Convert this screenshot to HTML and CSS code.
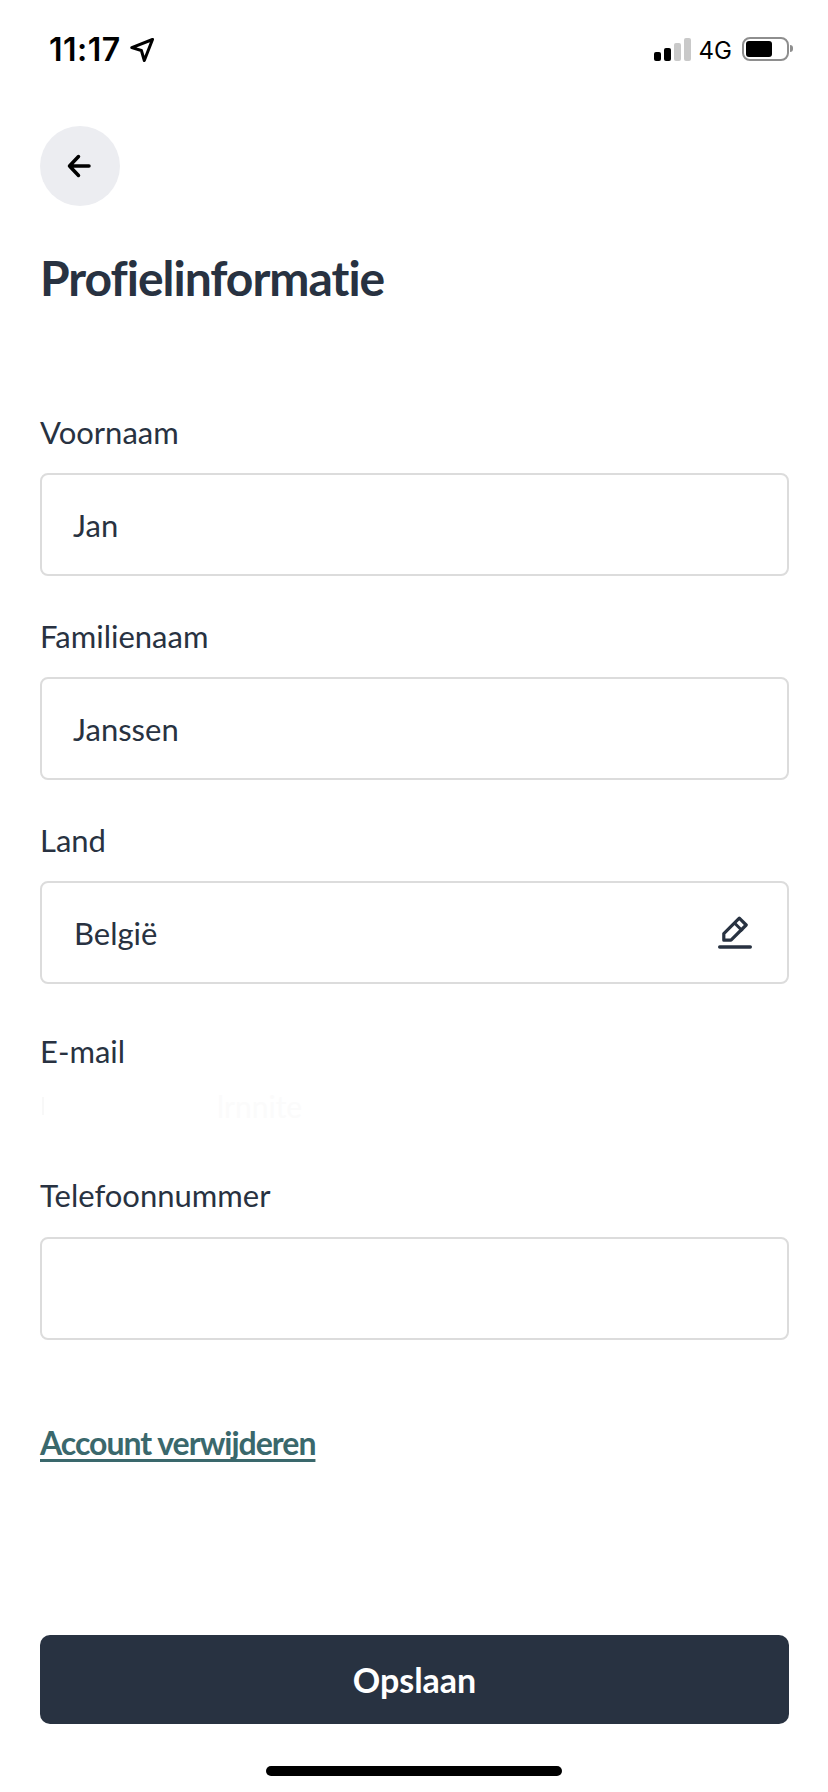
FILE: index.html
```html
<!DOCTYPE html>
<html lang="nl">
<head>
<meta charset="utf-8">
<title>Profielinformatie</title>
<link rel="stylesheet" href="styles.css">
</head>
<body>
<div class="screen">
  <header class="status">
    <div class="status-left">
      <span class="time">11:17</span>
      <svg class="loc" viewBox="0 0 24 24" width="24" height="24"><path d="M22.5 1.5 1.8 9.6l9.6 2.9 2.9 10z" fill="none" stroke="#000" stroke-width="3" stroke-linejoin="round"/></svg>
    </div>
    <div class="status-right">
      <div class="signal"><i class="b1"></i><i class="b2"></i><i class="b3 off"></i><i class="b4 off"></i></div>
      <span class="net">4G</span>
      <div class="battery"><div class="level"></div></div>
      <div class="nub"></div>
    </div>
  </header>
  <main class="content">
    <button class="back" aria-label="Terug">
      <svg viewBox="0 0 24 24" width="24" height="24"><path d="M22 12H2.500M11.500 2.500 2.500 12l9 9.500" fill="none" stroke="#000" stroke-width="3.500" stroke-linecap="round" stroke-linejoin="round"/></svg>
    </button>
    <h1 class="title">Profielinformatie</h1>
    <div class="field first">
      <label class="label">Voornaam</label>
      <div class="input">Jan</div>
    </div>
    <div class="field">
      <label class="label">Familienaam</label>
      <div class="input">Janssen</div>
    </div>
    <div class="field">
      <label class="label">Land</label>
      <div class="input select"><span>België</span>
        <svg viewBox="0 0 34 33" width="34" height="33"><path d="M21.300 2.200 28.200 9 13 24.200H5.800v-6.600z" fill="none" stroke="#283241" stroke-width="3.200" stroke-linejoin="round"/><path d="M16 6.500l8.500 8.500" fill="none" stroke="#283241" stroke-width="3"/><path d="M1.700 31h30.600" fill="none" stroke="#283241" stroke-width="3.400" stroke-linecap="round"/></svg>
      </div>
    </div>
    <div class="field email">
      <label class="label">E-mail</label>
      <div class="ghost"><span class="ghost-bar"></span><span class="ghost-text">lrnnite</span></div>
    </div>
    <div class="field phone">
      <label class="label">Telefoonnummer</label>
      <div class="input"></div>
    </div>
    <a class="delete" href="#">Account verwijderen</a>
    <button class="save">Opslaan</button>
  </main>
  <div class="home-wrap"><div class="home"></div></div>
</div>
</body>
</html>
```
FILE: styles.css
```css
* { box-sizing: border-box; }
html, body { margin: 0; padding: 0; background: #fff; }
.screen { width: 828px; height: 1792px; overflow: hidden; font-family: Lato, "Noto Sans", sans-serif; color: #283241; }

.status { height: 100px; display: flex; justify-content: space-between; padding: 36px 35px 0 49px; font-family: Inter, sans-serif; color: #000; }
.status-left { display: flex; align-items: flex-start; height: 28px; }
.time { font-size: 32px; font-weight: 600; line-height: 28px; letter-spacing: 0.5px; }
.loc { margin: 2px 0 0 9px; }
.status-right { display: flex; align-items: flex-start; }
.signal { display: flex; align-items: flex-end; gap: 3.500px; height: 23px; margin-top: 2px; }
.signal i { display: block; width: 6.500px; background: #000; border-radius: 2px; }
.signal .b1 { height: 9px; }
.signal .b2 { height: 13px; }
.signal .b3 { height: 18px; }
.signal .b4 { height: 23px; }
.signal .off { background: #c9c9c9; }
.net { font-size: 24px; line-height: 24px; margin: 3px 10px 0 8px; letter-spacing: 0; }
.battery { width: 47px; height: 24px; margin-top: 1px; border: 2px solid #8e8e8e; border-radius: 8px; padding: 2px; }
.level { width: 26px; height: 16px; background: #000; border-radius: 3px; }
.nub { width: 3px; height: 7px; margin: 9px 0 0 1px; background: #8e8e8e; border-radius: 0 3px 3px 0; }

.content { padding: 0 39px 0 40px; }
.back { display: flex; align-items: center; justify-content: center; width: 80px; height: 80px; margin: 26px 0 0; padding: 0 2px 0 0; border: 0; border-radius: 50%; background: #ecedf1; }
.title { margin: 40px 0 0; font-size: 48px; line-height: 64px; font-weight: 700; letter-spacing: -1px; }

.field { display: flex; flex-direction: column; }
.field.first { margin-top: 102px; }
.field + .field { margin-top: 40px; }
.label { display: block; height: 61px; font-size: 31px; line-height: 40px; }
.input { display: flex; align-items: center; justify-content: space-between; height: 103px; padding: 0 35px 0 31px; background: #fff; border: 2px solid #dcdcdc; border-radius: 8px; font-size: 31px; }
.select { padding-left: 32px; }
.select svg { margin: -1px 0 0; }

.field.email { margin-top: 47px; height: 124px; }
.email .label { height: 65px; }
.ghost { display: flex; align-items: center; height: 20px; }
.ghost-bar { width: 2px; height: 18px; margin-left: 2px; background: #f8f8f8; }
.ghost-text { margin-left: 173px; font-size: 30px; line-height: 20px; color: #fbfbfb; }
.field.phone { margin-top: 20px; }
.phone .label { height: 62px; }

.delete { display: block; margin-top: 81px; font-size: 32px; line-height: 44px; font-weight: 700; letter-spacing: -1px; color: #3a686c; text-decoration: underline; text-decoration-thickness: 3px; text-underline-offset: 4px; text-decoration-skip-ink: none; }
.save { display: block; width: 749px; height: 89px; margin-top: 170px; border: 0; border-radius: 10px; background: #283241; color: #fff; font: inherit; font-size: 34px; font-weight: 700; }

.home-wrap { display: flex; justify-content: center; margin-top: 42px; }
.home { width: 296px; height: 10px; background: #000; border-radius: 5px; }
```
